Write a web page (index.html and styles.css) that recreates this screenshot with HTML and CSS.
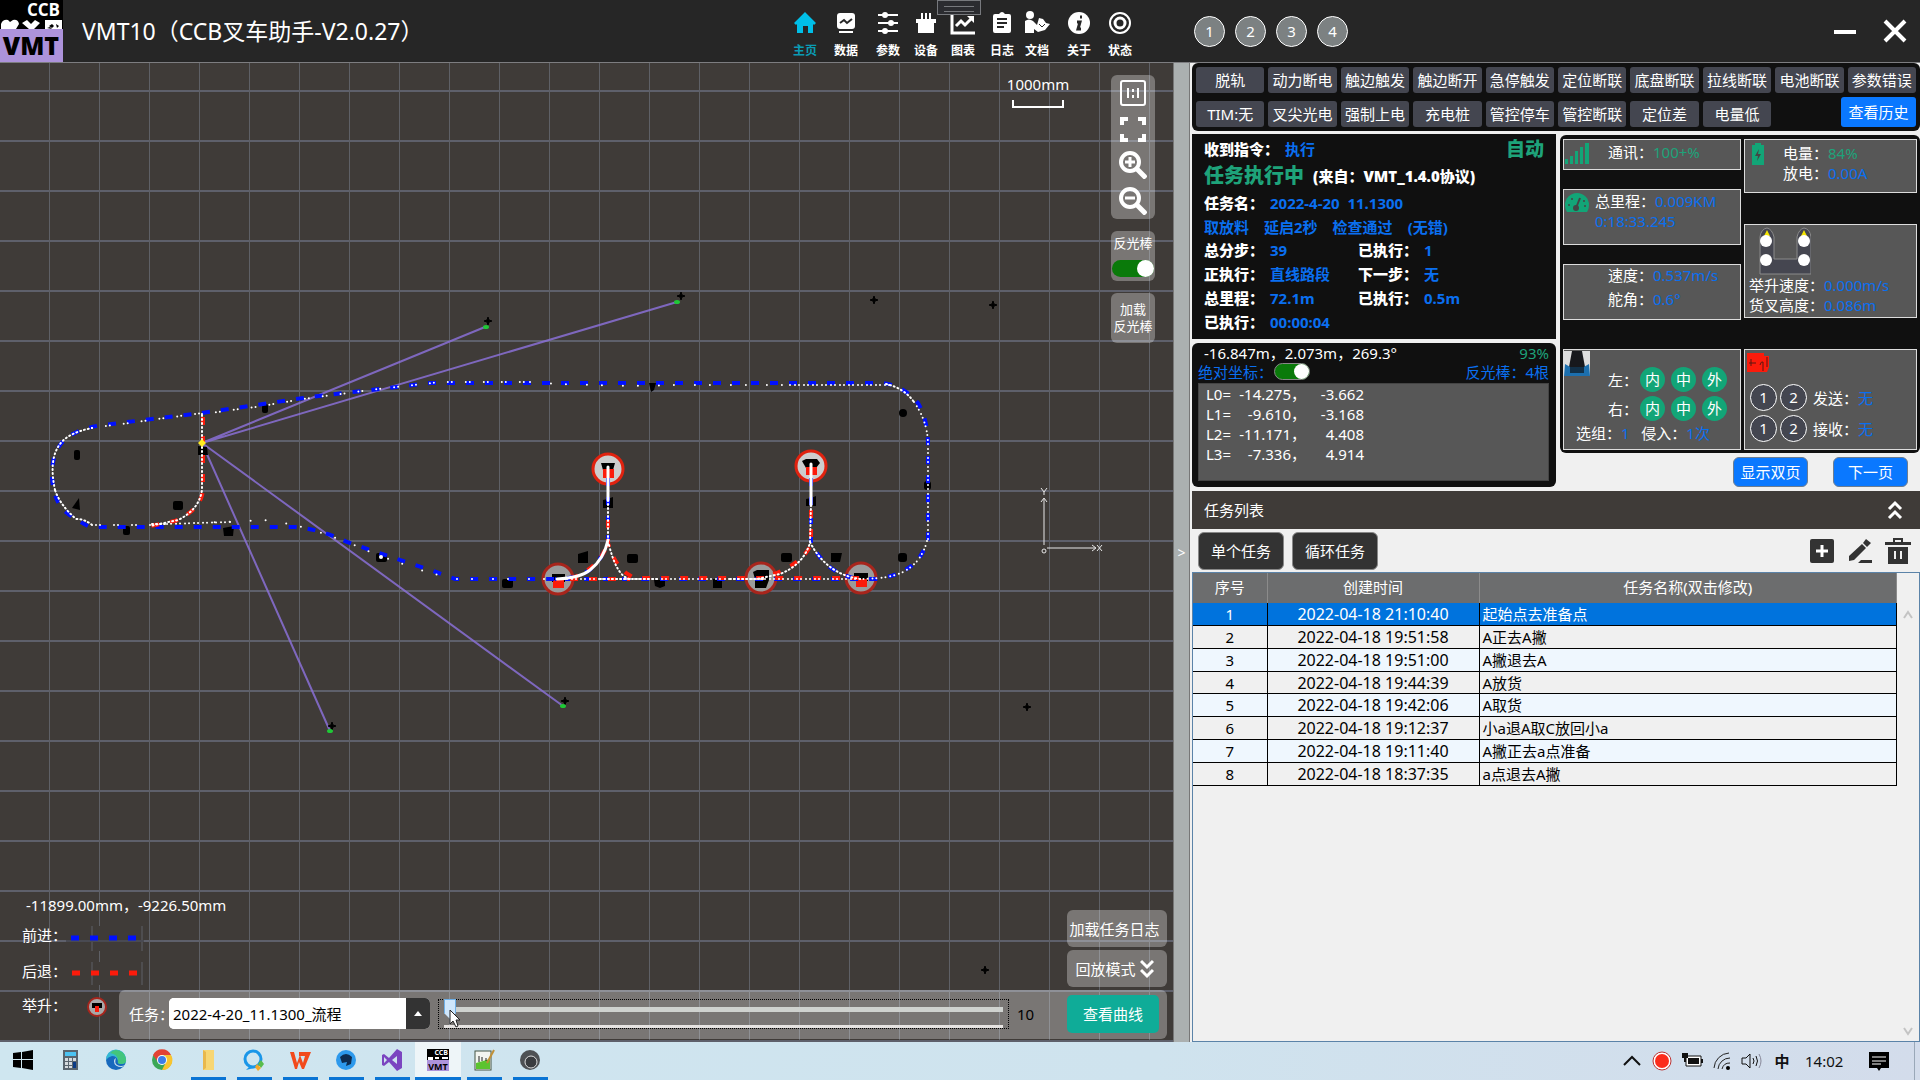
FILE: index.html
```html
<!DOCTYPE html>
<html lang="zh-CN">
<head>
<meta charset="utf-8">
<title>VMT10（CCB叉车助手-V2.0.27）</title>
<link rel="stylesheet" href="styles.css">
</head>
<body>
<div class="app">
  <header class="topbar">
    <svg class="logo" viewBox="0 0 63 62">
      <rect width="63" height="62" fill="#000"/>
      <rect y="29" width="63" height="33" fill="#ad93db"/>
      <text x="60" y="16" text-anchor="end" class="logo-small">CCB</text>
      <path d="M1 29V24Q3 19 8 20L10 22L13 20Q18 19 19 24L16 29Z M22 23L27 20L31 24L35 20L40 23L34 29H29Z M45 20H62V29H45Z" fill="#fff"/>
      <path d="M49 26l3-2 2 2-2 2zM56 24l3 2-2 2zM47 28l3-1 2 2z" fill="#000"/>
      <text x="31" y="55" text-anchor="middle" class="logo-big">VMT</text>
    </svg>
    <h1 class="title">VMT10（CCB叉车助手-V2.0.27）</h1>
    <nav class="nav">
      <a href="#" class="nav-item active"><svg viewBox="0 0 24 24"><path d="M12 1L23 12L21 14L20 13V22H15V15H10V22H4V13L3 14L1 12Z" fill="currentColor"/></svg>主页</a>
      <a href="#" class="nav-item"><svg viewBox="0 0 24 24"><rect x="3" y="2" width="18" height="16" rx="3" fill="currentColor"/><path d="M6 12l4-3 3 3 5-4" fill="none" stroke="#262626" stroke-width="2"/><path d="M5 20H19V22H5Z" fill="currentColor"/></svg>数据</a>
      <a href="#" class="nav-item"><svg viewBox="0 0 24 24"><g stroke="currentColor" stroke-width="2"><path d="M2 4H22M2 12H22M2 20H22"/></g><g fill="currentColor"><circle cx="9" cy="4" r="3"/><circle cx="15" cy="12" r="3"/><circle cx="9" cy="20" r="3"/></g></svg>参数</a>
      <a href="#" class="nav-item"><svg viewBox="0 0 24 24"><path d="M2 8H22V12H20V22H4V12H2Z M7 2H9V8H7Z M11 2H13V8H11Z M15 2H17V8H15Z" fill="currentColor"/></svg>设备</a>
      <a href="#" class="nav-item"><svg viewBox="0 0 24 24"><path d="M1 4V22H24" fill="none" stroke="currentColor" stroke-width="3"/><path d="M5 15l5-5 4 4 7-7" fill="none" stroke="currentColor" stroke-width="3"/><path d="M16 5H23V12Z" fill="currentColor"/></svg>图表</a>
      <a href="#" class="nav-item"><svg viewBox="0 0 24 24"><path d="M5 3H9Q12-1 15 3H19Q21 3 21 5V20Q21 22 19 22H5Q3 22 3 20V5Q3 3 5 3Z" fill="currentColor"/><path d="M7 8H17M7 12H17M7 16H14" stroke="#262626" stroke-width="2"/></svg>日志</a>
      <a href="#" class="nav-item"><svg viewBox="0 0 24 24"><circle cx="5" cy="4" r="4" fill="currentColor"/><path d="M0 10Q4 7 8 10L12 14L14 7L18 8L21 12L25 13L20 19L13 21L9 18V22H0Z" fill="currentColor"/><path d="M14 13l3 3 3-3" stroke="#262626" fill="none"/></svg>文档</a>
      <a href="#" class="nav-item"><svg viewBox="0 0 24 24"><circle cx="12" cy="12" r="11" fill="currentColor"/><path d="M13 6h2M10 11h3l-2 7h3" fill="none" stroke="#262626" stroke-width="3"/></svg>关于</a>
      <a href="#" class="nav-item"><svg viewBox="0 0 24 24"><circle cx="12" cy="12" r="10" fill="none" stroke="currentColor" stroke-width="2"/><circle cx="12" cy="12" r="5" fill="none" stroke="currentColor" stroke-width="3"/></svg>状态</a>
    </nav>
    <div class="rounds"><button>1</button><button>2</button><button>3</button><button>4</button></div>
    <div class="winctl">
      <button aria-label="最小化"><svg viewBox="0 0 24 24"><path d="M1 13H23" stroke="#fff" stroke-width="4"/></svg></button>
      <button aria-label="关闭"><svg viewBox="0 0 24 24"><path d="M2 2L22 22M22 2L2 22" stroke="#fff" stroke-width="4"/></svg></button>
    </div>
    <div class="grip"></div>
  </header>

  <main class="main">
    <section class="map">
      <svg class="canvas" viewBox="0 63 1173 979" preserveAspectRatio="xMinYMin slice">
        <defs>
          <pattern id="grid" x="49" y="90" width="50" height="50" patternUnits="userSpaceOnUse">
            <rect width="50" height="2" fill="#5e606b"/><rect width="1" height="50" fill="#5e6066"/>
          </pattern>
          <path id="mark" d="M0-4L1-1L4 0L1 1L0 4L-1 1L-4 0L-1-1Z" stroke="#000" stroke-width="1"/>
          <g id="stop"><circle r="15" stroke-width="3"/></g>
        </defs>
        <rect y="63" width="1173" height="979" fill="#3f3b38"/>
        <rect y="63" width="1173" height="979" fill="url(#grid)"/>
        <g class="ray"><path d="M202 443L485 327M202 443L677 302M202 443L563 706M202 443L330 731"/></g>
        <g class="halo hot"><use href="#stop" x="608" y="469"/><use href="#stop" x="811" y="466"/></g>
        <g class="halo"><use href="#stop" x="558" y="579"/><use href="#stop" x="761" y="578"/><use href="#stop" x="861" y="578"/></g>
        <g class="tags">
          <rect x="262" y="404" width="6" height="9" rx="2"/><rect x="74" y="450" width="6" height="10" rx="2"/><path d="M72 508L79 498L80 510Z"/>
          <rect x="173" y="501" width="10" height="9" rx="2"/><rect x="123" y="526" width="7" height="9" rx="2"/><path d="M223 528L234 526L233 536H224Z"/>
          <rect x="376" y="553" width="11" height="9" rx="2"/><rect x="502" y="579" width="11" height="9" rx="2"/><path d="M198 446L207 447L208 455H198Z"/>
          <path d="M603 500L607 499L613 497V508H603Z"/><path d="M578 554L588 551V563H578Z"/><rect x="627" y="554" width="11" height="9" rx="2"/>
          <path d="M654 580H665V586L660 588L655 586Z"/><rect x="713" y="579" width="9" height="9"/><rect x="781" y="553" width="11" height="9" rx="2"/><path d="M831 553H842L840 562H831Z"/>
          <rect x="898" y="553" width="9" height="9" rx="3"/><rect x="924" y="481" width="7" height="9" rx="3"/><ellipse cx="903" cy="413" rx="4" ry="4"/>
          <path d="M649 383H656L654 390L651 392Z"/><path d="M806 499L811 498L816 496V506H806Z"/>
          <path d="M601 463H615L613 470H603Z"/><path d="M802 461L806 459H817L820 463L816 468H806Z"/><path d="M552 574H565V582H552Z"/><path d="M753 572L757 570H769V580L766 588H755V579Z"/><path d="M854 573H868V581H854Z"/>
        </g>
        <g fill="#fb1b0b"><rect x="603" y="469" width="11" height="9"/><rect x="806" y="467" width="11" height="8"/><rect x="553" y="580" width="11" height="8"/><rect x="856" y="579" width="11" height="8"/></g>
        <g class="blue">
          <path d="M202 413L310 397L405 386L430 383H883Q902 385 918 403Q928 420 928 445V540Q920 563 905 570Q893 577 875 579H455L436 572L382 554L347 542Q320 529 295 527H90Q68 516 60 506Q52 492 52 474Q52 445 73 434Q86 427 103 425Z"/>
          <path d="M608 478V543Q600 563 588 571T555 579M811 478V543Q820 560 831 568Q845 578 862 579"/>
        </g>
        <g class="red">
          <path d="M203 417V490Q201 510 175 521L150 526M608 520V543Q613 562 626 573L634 578H861M811 510V545Q800 567 762 578M570 579H630M605 550Q595 570 570 579" />
        </g>
        <g class="white">
          <path class="d9" d="M202 414L255 407L310 398L370 390L405 386L440 382L530 382"/>
          <path class="d20" d="M530 382L560 384L630 386L680 385L790 385"/>
          <path class="d5" d="M790 385H892"/>
          <path class="d3" d="M886 384Q904 388 914 402"/>
          <path class="d5" d="M914 402Q928 422 928 445V541"/>
          <path class="d5" d="M927 541Q922 560 908 569Q894 579 860 579"/>
          <path class="d5" d="M860 579H565"/>
          <path class="d20" d="M565 579H455L430 573L400 563L375 554L347 542L307 528L270 520L200 523"/>
          <path class="d5" d="M230 522L165 524"/>
          <path class="d3" d="M165 524H150"/>
          <path class="d9" d="M150 525H90"/>
          <path class="d3" d="M92 525Q85 519 76 519Q60 505 55 490"/>
          <path class="d3" d="M55 490Q49 462 58 447Q66 433 92 428"/>
          <path class="d9" d="M92 428L202 413"/>
          <path class="d3" d="M202 415V490Q199 510 178 520L150 526"/>
          <path class="line" d="M608 467V500M811 464V505M608 540Q604 559 590 570Q580 578 557 579"/>
          <path class="d3" d="M608 500V545M811 505L810 543Q803 565 780 574L757 579M810 542Q826 574 860 579"/>
          <path class="d3" d="M609 545Q617 577 630 579"/>
          <path class="d3" d="M600 579H660M730 579H765"/>
        </g>
        <circle cx="381" cy="557" r="2" fill="#fff"/>
        <path d="M198 443L202 439L206 443L202 447Z" fill="#ffeb20"/>
        <g><use href="#mark" x="488" y="321"/><use href="#mark" x="681" y="296"/><use href="#mark" x="874" y="300"/><use href="#mark" x="993" y="305"/><use href="#mark" x="565" y="701"/><use href="#mark" x="332" y="726"/><use href="#mark" x="985" y="970"/><use href="#mark" x="1027" y="707"/></g>
        <g fill="#1fc836"><ellipse cx="486" cy="327" rx="3" ry="2"/><ellipse cx="677" cy="302" rx="3" ry="2"/><ellipse cx="563" cy="706" rx="3" ry="2"/><ellipse cx="330" cy="731" rx="3" ry="2"/></g>
        <g class="axis"><path d="M1044 545V499M1041 502L1044 498L1047 502M1047 548H1095M1092 545L1096 548L1092 551"/><circle cx="1044" cy="551" r="2"/><path d="M1041 488L1044 492L1047 488M1044 492V495M1097 545L1102 551M1102 545L1097 551"/></g>
        <path d="M1013 100V107H1063V100" fill="none" stroke="#fff" stroke-width="2"/>
        <text x="1038" y="90" text-anchor="middle" class="scale-text">1000mm</text>
        <text x="26" y="911" class="scale-text">-11899.00mm，-9226.50mm</text>
        <g class="legend">
          <rect x="66" y="926" width="78" height="25" fill="#3f3b38"/><rect x="66" y="962" width="78" height="23" fill="#3f3b38"/>
          <path d="M92 926V951M142 926V951M92 962V985M142 962V985" stroke="#5e6066"/><path d="M66 941H144" stroke="#494a52" stroke-width="2"/>
          <path d="M71 938H140" stroke="#0010ff" stroke-width="5" stroke-dasharray="8 11"/><path d="M72 973H140" stroke="#fb1b0b" stroke-width="5" stroke-dasharray="8 11"/>
          <circle cx="97" cy="1007" r="9" fill="#a8a8a8" stroke="#a8251c" stroke-width="2"/><path d="M92 1003H102V1008H92Z" fill="#000"/><path d="M95 1006H99V1012H95Z" fill="#fb1b0b"/>
          <text x="22" y="941" class="scale-text">前进：</text><text x="22" y="977" class="scale-text">后退：</text><text x="22" y="1011" class="scale-text">举升：</text>
        </g>
      </svg>
      <div class="map-tools">
        <div class="glass zoombox">
          <button aria-label="原始比例"><svg viewBox="0 0 28 28"><rect x="2" y="2" width="24" height="24" rx="2" fill="none" stroke="#fff" stroke-width="2"/><path d="M9 9V19M19 9V19" stroke="#fff" stroke-width="2"/><path d="M13 10H15V13H13ZM13 16H15V19H13Z" fill="#fff"/></svg></button>
          <button aria-label="全屏"><svg viewBox="0 0 28 28"><path d="M3 10V4H9M19 4H25V10M25 19V25H19M9 25H3V19" fill="none" stroke="#fff" stroke-width="4"/></svg></button>
          <button aria-label="放大"><svg viewBox="0 0 28 28"><circle cx="11" cy="11" r="9" fill="none" stroke="#fff" stroke-width="4"/><path d="M18 18L27 27" stroke="#fff" stroke-width="5"/><path d="M6 11H16M11 6V16" stroke="#fff" stroke-width="3"/></svg></button>
          <button aria-label="缩小"><svg viewBox="0 0 28 28"><circle cx="11" cy="11" r="9" fill="none" stroke="#fff" stroke-width="4"/><path d="M18 18L27 27" stroke="#fff" stroke-width="5"/><path d="M6 11H16" stroke="#fff" stroke-width="3"/></svg></button>
        </div>
        <label class="glass reflector">反光棒<input type="checkbox" class="switch wide" checked></label>
        <button class="glass load-ref">加载<br>反光棒</button>
      </div>
      <div class="map-bottom">
        <button class="glass side-btn">加载任务日志</button>
        <button class="glass side-btn">回放模式<svg viewBox="0 0 14 20"><path d="M1 2L7 8L13 2M1 11L7 17L13 11" fill="none" stroke="#fff" stroke-width="3"/></svg></button>
        <div class="glass playbar">
          <label for="task">任务：</label>
          <div class="combo"><select id="task"><option>2022-4-20_11.1300_流程</option></select><span class="combo-arrow"></span></div>
          <div class="slider"><input type="range" min="0" max="100" value="0" aria-label="回放进度"><span class="ticks"></span></div>
          <output class="speed">10</output>
          <button class="curve-btn">查看曲线</button>
        </div>
      </div>
      <svg class="cursor" viewBox="0 0 12 19"><path d="M1 1V15L4 12L7 18L9 17L7 11H11Z" fill="#fff" stroke="#222"/></svg>
    </section>

    <div class="splitter">&gt;</div>

    <aside class="side">
      <section class="alarms">
        <span>脱轨</span><span>动力断电</span><span>触边触发</span><span>触边断开</span><span>急停触发</span><span>定位断联</span><span>底盘断联</span><span>拉线断联</span><span>电池断联</span><span>参数错误</span>
        <span>TIM:无</span><span>叉尖光电</span><span>强制上电</span><span>充电桩</span><span>管控停车</span><span>管控断联</span><span>定位差</span><span>电量低</span>
        <button class="history">查看历史</button>
      </section>
      <div class="panels">
        <div class="col">
          <section class="status">
            <div class="row first"><b>收到指令：</b><i>执行</i><strong>自动</strong></div>
            <div class="row big"><strong>任务执行中</strong><b>(来自：VMT_1.4.0协议)</b></div>
            <div class="row"><b>任务名：</b><i>2022-4-20&nbsp; 11.1300</i></div>
            <div class="row steps"><i>取放料</i><i>延启2秒</i><i>检查通过</i><i>(无错)</i></div>
            <div class="row"><b>总分步：</b><i class="w">39</i><b>已执行：</b><i>1</i></div>
            <div class="row"><b>正执行：</b><i class="w">直线路段</i><b>下一步：</b><i>无</i></div>
            <div class="row"><b>总里程：</b><i class="w">72.1m</i><b>已执行：</b><i>0.5m</i></div>
            <div class="row"><b>已执行：</b><i>00:00:04</i></div>
          </section>
          <section class="pose">
            <div class="pose-line top"><span>-16.847m，2.073m，269.3°</span><em>93%</em></div>
            <div class="pose-line"><label for="abs">绝对坐标：</label><input id="abs" type="checkbox" class="switch" checked><span class="end">反光棒：4根</span></div>
            <div class="coords">
              <span>L0=</span><span>-14.275，</span><span>-3.662</span>
              <span>L1=</span><span>-9.610，</span><span>-3.168</span>
              <span>L2=</span><span>-11.171，</span><span>4.408</span>
              <span>L3=</span><span>-7.336，</span><span>4.914</span>
            </div>
          </section>
        </div>
        <div class="col">
          <section class="cards">
            <div class="card-col left">
              <div class="card signal"><svg viewBox="0 0 24 22"><path d="M0 22V17H3V22ZM5 22V14H8V22ZM10 22V9H13V22ZM15 22V5H18V22ZM20 22V1H24V22Z" fill="#12a577"/></svg><p>通讯：<em>100+%</em></p></div>
              <div class="card odo"><svg viewBox="0 0 24 20"><path d="M2 19Q0 16 0 12A12 12 0 0 1 24 12Q24 16 22 19Z" fill="#12a577"/><path d="M11 15L15 5" stroke="#444" stroke-width="2"/><circle cx="11" cy="15" r="3" fill="#444"/><g fill="#444"><circle cx="4" cy="12" r="1"/><circle cx="7" cy="6" r="1"/><circle cx="19" cy="8" r="1"/><circle cx="20" cy="13" r="1"/></g></svg><p>总里程：<i>0.009KM</i><br><i>0:18:33.245</i></p></div>
              <div class="card speedo"><p>速度：<i>0.537m/s</i></p><p>舵角：<i>0.6°</i></p></div>
              <div class="card radar">
                <svg class="lidar" viewBox="0 0 26 25"><rect width="26" height="25" fill="#ddd"/><path d="M8 0H18L21 16H5Z" fill="#17181c"/><path d="M1 13L8 17H18L25 13L26 25H0Z" fill="#1c6fae"/><path d="M6 16H20V22H6Z" fill="#123048"/></svg>
                <div class="zone">左：<span>内</span><span>中</span><span>外</span></div>
                <div class="zone">右：<span>内</span><span>中</span><span>外</span></div>
                <p>选组：<i>1</i> &nbsp; 侵入：<i>1次</i></p>
              </div>
            </div>
            <div class="card-col right">
              <div class="card power"><svg viewBox="0 0 12 22"><path d="M3 0H9V2H12V22H0V2H3Z" fill="#12a577"/><path d="M7 6L3 13H6L5 18L9 11H6Z" fill="#444"/></svg><p>电量：<em>84%</em><br>放电：<i>0.00A</i></p></div>
              <div class="card fork">
                <svg viewBox="0 0 52 48"><path d="M1 47V10Q2 2 8 1Q13 2 15 10V32H38V10Q40 2 45 1Q51 2 52 10V47Z" fill="#454650" stroke="#8b8b8b"/><path d="M5 9L8 3L11 9ZM42 9L45 3L48 9Z" fill="#f3e400"/><g fill="#fff"><circle cx="7" cy="14" r="6"/><circle cx="7" cy="33" r="6"/><circle cx="45" cy="14" r="6"/><circle cx="45" cy="33" r="6"/></g></svg>
                <p>举升速度：<i>0.000m/s</i></p><p>货叉高度：<i>0.086m</i></p>
              </div>
              <div class="card comm">
                <svg viewBox="0 0 22 20"><path d="M0 0H17V3L22 3V14L20 19H0Z" fill="#fb1b0b"/><path d="M4 6V13M2 10H9M13 12Q14 8 16 9V18M20 4V14" stroke="#5b1710" fill="none"/></svg>
                <div class="io"><span>1</span><span>2</span>发送：<i>无</i></div>
                <div class="io"><span>1</span><span>2</span>接收：<i>无</i></div>
              </div>
            </div>
          </section>
          <div class="pager"><button>显示双页</button><button>下一页</button></div>
        </div>
      </div>
      <div class="list-head"><h2>任务列表</h2><svg viewBox="0 0 16 20"><path d="M2 9L8 3L14 9M2 18L8 12L14 18" fill="none" stroke="#fff" stroke-width="3"/></svg></div>
      <div class="list-tools">
        <button class="dark">单个任务</button><button class="dark">循环任务</button>
        <button class="tool" aria-label="新增"><svg viewBox="0 0 26 26"><rect x="1" y="1" width="24" height="24" rx="2" fill="#333"/><path d="M13 7V19M7 13H19" stroke="#fff" stroke-width="3"/></svg></button>
        <button class="tool" aria-label="编辑"><svg viewBox="0 0 26 26"><path d="M2 23V18L15 6L19 10L7 22ZM16 5L19 1L24 5L20 9ZM11 25L14 22H25V25Z" fill="#333"/></svg></button>
        <button class="tool" aria-label="删除"><svg viewBox="0 0 26 26"><path d="M0 4H8V0H18V4H26V7H0ZM3 9H23V26H3Z" fill="#333"/><path d="M10 4V2H16V4Z" fill="#f0f0f0"/><path d="M10 13V21M16 13V21" stroke="#f0f0f0" stroke-width="2"/></svg></button>
      </div>
      <div class="table-box">
        <table>
          <colgroup><col class="c1"><col class="c2"><col></colgroup>
          <thead><tr><th>序号</th><th>创建时间</th><th>任务名称(双击修改)</th></tr></thead>
          <tbody>
            <tr class="sel"><td>1</td><td>2022-04-18 21:10:40</td><td>起始点去准备点</td></tr>
            <tr><td>2</td><td>2022-04-18 19:51:58</td><td>A正去A撇</td></tr>
            <tr><td>3</td><td>2022-04-18 19:51:00</td><td>A撇退去A</td></tr>
            <tr><td>4</td><td>2022-04-18 19:44:39</td><td>A放货</td></tr>
            <tr><td>5</td><td>2022-04-18 19:42:06</td><td>A取货</td></tr>
            <tr><td>6</td><td>2022-04-18 19:12:37</td><td>小a退A取C放回小a</td></tr>
            <tr><td>7</td><td>2022-04-18 19:11:40</td><td>A撇正去a点准备</td></tr>
            <tr><td>8</td><td>2022-04-18 18:37:35</td><td>a点退去A撇</td></tr>
          </tbody>
        </table>
        <div class="scroll"><svg viewBox="0 0 10 10"><path d="M1 8L5 2L9 8" fill="none" stroke="#c4c4c4" stroke-width="2"/></svg><svg viewBox="0 0 10 10"><path d="M1 2L5 8L9 2" fill="none" stroke="#c4c4c4" stroke-width="2"/></svg></div>
      </div>
    </aside>
  </main>

  <footer class="taskbar">
    <div class="apps">
      <button aria-label="开始"><svg viewBox="0 0 24 24"><path d="M1 5L9 4V11H1ZM10 4L21 2V11H10ZM1 12H9V20L1 19ZM10 12H21V22L10 20Z" fill="#000"/></svg></button>
      <button aria-label="计算器"><svg viewBox="0 0 24 24"><rect x="5" y="2" width="15" height="20" fill="#59646e"/><rect x="7" y="4" width="11" height="4" fill="#4cc2f1"/><path d="M7 10h3v3h-3zM11 10h3v3h-3zM15 10h3v3h-3zM7 14h3v3h-3zM11 14h3v3h-3zM7 18h3v2h-3zM11 18h3v2h-3z" fill="#d5dade"/><path d="M15 14h3v6h-3z" fill="#0b3b86"/></svg></button>
      <button aria-label="Edge"><svg viewBox="0 0 24 24"><circle cx="12" cy="12" r="10" fill="#1769bd"/><path d="M2 12A10 10 0 0 1 22 11Q23 16 17 16Q13 16 14 13Q13 8 8 8Q4 9 2 12Z" fill="#35b9d4"/><path d="M12 2A10 10 0 0 1 22 11Q23 16 17 16Q13 16 14 13Q14 6 6 5Q9 2 12 2Z" fill="#43c57c"/><path d="M10 13Q10 19 18 19L21 17Q17 19 13 17Q10 15 12 10Q10 11 10 13Z" fill="#cfe4ef"/></svg></button>
      <button aria-label="Chrome"><svg viewBox="0 0 24 24"><circle cx="12" cy="12" r="10" fill="#3ba757"/><path d="M3 7A10 10 0 0 1 21 7H12L8 14Z" fill="#e34234"/><path d="M21 7A10 10 0 0 1 12 22L17 12L14 7Z" fill="#f9c42e"/><circle cx="12" cy="12" r="5" fill="#fff"/><circle cx="12" cy="12" r="4" fill="#3e7de8"/></svg></button>
      <button class="run" aria-label="文件夹"><svg viewBox="0 0 24 24"><path d="M7 2H18V22H7Z" fill="#f7d673"/><path d="M7 2L10 4V20L7 22Z" fill="#e9b84c"/></svg></button>
      <button class="run" aria-label="QQ浏览"><svg viewBox="0 0 24 24"><circle cx="11" cy="11" r="8" fill="none" stroke="#1a96e8" stroke-width="3"/><path d="M8 18L4 22L12 20Z" fill="#1a96e8"/><path d="M19 12l3 4-3 4-3-4z" fill="#59bd4b"/><path d="M15 16l4 4-3 3-3-4z" fill="#f6a825"/></svg></button>
      <button class="run" aria-label="WPS"><svg viewBox="0 0 24 24"><path d="M2 4H6L9 15L12 7L15 15L17 8H11V4H23L16 21H14L11 14L9 21H7Z" fill="#f24a1c"/></svg></button>
      <button class="run" aria-label="浏览器"><svg viewBox="0 0 24 24"><circle cx="12" cy="12" r="10" fill="#2d99ec"/><path d="M6 9Q12 3 18 9L17 16L12 18L13 14L8 15Z" fill="#0d2c50"/></svg></button>
      <button class="run" aria-label="Visual Studio"><svg viewBox="0 0 24 24"><path d="M17 1L22 4V20L17 23L9 14L4 18L2 17V7L4 6L9 10ZM17 8L12 12L17 16ZM4 9V15L7 12Z" fill="#7b45c0"/></svg></button>
      <button class="run on" aria-label="VMT"><svg viewBox="0 0 24 24"><rect x="1" y="1" width="22" height="12" fill="#000"/><rect x="1" y="12" width="22" height="11" fill="#ad93db"/><text x="22" y="7" text-anchor="end" class="mini-logo w">CCB</text><path d="M2 9h5v3h-5zM9 9h4v2h-4zM16 9h6v2h-6z" fill="#fff"/><text x="12" y="22" text-anchor="middle" class="mini-logo">VMT</text></svg></button>
      <button class="run" aria-label="记事本"><svg viewBox="0 0 24 24"><rect x="3" y="3" width="16" height="19" fill="#f3f5f0" stroke="#454"/><path d="M4 15L18 11V21H4Z" fill="#5cc42f"/><path d="M7 8V14M10 9V13M14 10V13" stroke="#222"/><path d="M22 2L15 15" stroke="#c09038" stroke-width="2"/></svg></button>
      <button class="run" aria-label="OBS"><svg viewBox="0 0 24 24"><circle cx="12" cy="12" r="10" fill="#4e5154"/><circle cx="13" cy="14" r="6" fill="#3a3c3f" stroke="#ddd"/></svg></button>
    </div>
    <div class="tray">
      <svg viewBox="0 0 24 24"><path d="M4 16L12 8L20 16" fill="none" stroke="#111" stroke-width="2"/></svg>
      <svg viewBox="0 0 24 24"><circle cx="12" cy="12" r="9" fill="#fff" stroke="#b33" /><circle cx="12" cy="12" r="7" fill="#fb2c1c"/></svg>
      <svg viewBox="0 0 24 24"><path d="M6 7H21V17H6Z" fill="#fff" stroke="#111"/><path d="M8 9H19V15H8Z M21 10H23V14H21Z M2 4H8V9H6V13H4V9H2Z" fill="#111"/></svg>
      <svg viewBox="0 0 24 24"><path d="M4 19A16 16 0 0 1 19 4M8 20A12 12 0 0 1 20 9M12 20A8 8 0 0 1 20 14" fill="none" stroke="#222" stroke-width="1"/><circle cx="18" cy="19" r="2"/></svg>
      <svg viewBox="0 0 24 24"><path d="M2 9H6L10 5V19L6 15H2ZM13 9Q15 12 13 15M16 7Q19 12 16 17" fill="none" stroke="#111"/><path d="M19 5Q23 12 19 19" fill="none" stroke="#889"/></svg>
      <span class="ime">中</span><time>14:02</time>
      <svg class="note" viewBox="0 0 24 24"><path d="M2 3H22V19H14L12 22L10 19H2Z" fill="#000"/><path d="M5 8H19M5 12H19M5 15H14" stroke="#fff"/></svg>
      <span class="peek"></span>
    </div>
  </footer>
</div>
</body>
</html>
```
FILE: styles.css
```css
* { box-sizing: border-box; }
body { margin: 0; font: 15px/20px "Noto Sans", "Noto Sans CJK SC", sans-serif; color: #fff; background: #f0f0f0; }
button { font: inherit; color: inherit; border: 0; padding: 0; margin: 0; background: none; }
p, h1, h2 { margin: 0; font-size: inherit; font-weight: normal; }
i, em { font-style: normal; }
i { color: #0a6ff0; }
em { color: #1ea37a; }
.app { display: flex; flex-direction: column; height: 100vh; }

.topbar { position: relative; display: flex; align-items: center; height: 63px; background: #262626; border-bottom: 1px solid #7d7d80; }
.logo { width: 63px; height: 62px; }
.logo-small { font: bold 17px "Open Sans", sans-serif; fill: #fff; }
.logo-big { font: 800 25px "Open Sans", sans-serif; fill: #000; }
.title { flex: 0 0 721px; padding-left: 19px; font-size: 23px; line-height: 30px; white-space: nowrap; }
.nav { display: grid; grid-template-columns: 42px 40px 44px 32px 42px 36px 34px 50px 32px; padding-top: 8px; }
.nav-item { display: flex; flex-direction: column; align-items: center; gap: 8px; color: #fff; text-decoration: none; font-weight: bold; font-size: 12px; line-height: 16px; }
.nav-item svg { width: 24px; height: 24px; overflow: visible; }
.nav-item.active { color: #0a9cb4; }
.nav-item.active svg { color: #00bfe8; }
.rounds { display: flex; gap: 10px; margin-left: 58px; }
.rounds button { width: 31px; height: 31px; border: 1px solid #fff; border-radius: 50%; background: #7c8182; }
.winctl { display: flex; gap: 26px; margin-left: auto; padding-right: 13px; }
.winctl svg { display: block; width: 24px; height: 24px; }
.grip { position: absolute; left: 937px; top: 0; width: 44px; height: 15px; background: #2b2c30; border: 1px solid #77797d; }
.grip::after { content: ""; display: block; margin: 5px 6px; height: 4px; border: solid #77797d; border-width: 1px 0; }

.main { flex: 1; min-height: 0; display: grid; grid-template-columns: 1173fr 17px 730fr; }
.map { position: relative; min-width: 0; overflow: hidden; display: flex; flex-direction: column; justify-content: space-between; background: #3f3b38; }
.canvas { position: absolute; inset: 0; width: 100%; height: 100%; }
.ray { stroke: #8a70d6; stroke-width: 2; opacity: .85; fill: none; }
.halo { fill: #9b9b9b; stroke: #a8251c; }
.halo.hot { fill: #cdcdcd; stroke: #e0220f; }
.blue, .red, .white, .axis { fill: none; }
.blue { stroke: #0010ff; stroke-width: 4; stroke-dasharray: 8 11; }
.red { stroke: #fb1b0b; stroke-width: 4; stroke-dasharray: 8 11; }
.white { stroke: #fff; stroke-width: 2; stroke-linecap: round; }
.d3 { stroke-dasharray: 1 3; }
.d5 { stroke-dasharray: 0 5 0 4; }
.d9 { stroke-dasharray: 0 14 0 4; }
.d20 { stroke-dasharray: 0 21 0 15; }
.line { stroke-width: 3; }
.axis { stroke: #e8e8e8; }
.scale-text { font: 15px "Noto Sans", "Noto Sans CJK SC", sans-serif; fill: #fff; }
.glass { background: rgba(255, 255, 255, .3); border-radius: 6px; }
.map-tools { position: relative; align-self: flex-end; display: flex; flex-direction: column; gap: 12px; width: 44px; margin: 12px 18px 0 0; font-size: 13px; line-height: 17px; text-align: center; }
.zoombox { display: flex; flex-direction: column; align-items: center; gap: 8px; padding: 4px 0; height: 144px; }
.zoombox svg { display: block; width: 28px; height: 28px; }
.reflector { display: flex; flex-direction: column; align-items: center; gap: 8px; height: 50px; padding-top: 4px; white-space: nowrap; }
.load-ref { height: 50px; white-space: nowrap; }
.switch { appearance: none; margin: 0; width: 36px; height: 17px; border: 1px solid #888; border-radius: 9px; background: #0a7a0a; display: flex; justify-content: flex-end; }
.switch::before { content: ""; width: 15px; height: 15px; border-radius: 50%; background: #fff; }
.switch.wide { width: 42px; border: 0; }
.switch.wide::before { width: 17px; height: 17px; }
.map-bottom { position: relative; display: flex; flex-direction: column; align-items: flex-end; gap: 3px; padding: 0 6px 3px 119px; }
.side-btn { display: flex; align-items: center; justify-content: center; gap: 4px; width: 100px; height: 37px; padding-right: 5px; white-space: nowrap; }
.side-btn svg { width: 14px; height: 20px; }
.playbar { align-self: stretch; display: flex; align-items: center; height: 49px; padding: 0 8px 2px 10px; }
.playbar label { width: 40px; white-space: nowrap; }
.combo { display: flex; width: 261px; height: 31px; background: #fff; border-radius: 5px; overflow: hidden; }
.combo select { appearance: none; flex: 1; min-width: 0; border: 0; padding: 0 4px; font: inherit; color: #000; background: #fff; }
.combo-arrow { width: 24px; background: #333; display: grid; place-items: center; }
.combo-arrow::after { content: ""; border: 4px solid transparent; border-top: 0; border-bottom: 5px solid #fff; }
.slider { flex: 1; height: 30px; margin: 0 8px; padding: 0 5px; border: 1px dotted #000; display: flex; flex-direction: column; justify-content: space-between; }
.slider input { appearance: none; display: block; width: 100%; height: 19px; margin: 0; background: linear-gradient(#cfd2cf, #cfd2cf) center 7px / 100% 5px no-repeat; }
.slider input::-webkit-slider-thumb { appearance: none; width: 12px; height: 20px; background: #cfe6fb; border: 1px solid #6fb0e8; clip-path: polygon(0 0, 100% 0, 100% 70%, 50% 100%, 0 70%); }
.ticks { height: 3px; background: #e6e3e1; }
.speed { width: 50px; color: #000; }
.curve-btn { width: 92px; height: 38px; border-radius: 5px; background: #0fac98; }
.cursor { position: absolute; left: 449px; top: 946px; width: 12px; height: 19px; }

.splitter { display: grid; place-items: center; background: #abb0b0; border: solid #777; border-width: 0 1px; font-size: 14px; }
.side { min-width: 0; display: flex; flex-direction: column; padding-left: 2px; color: #fff; background: #f0f0f0; }
.alarms { display: grid; grid-template-columns: repeat(10, minmax(0, 1fr)); gap: 8px 4px; padding: 4px; height: 68px; background: #101010; border-radius: 6px; }
.alarms span { height: 26px; line-height: 26px; text-align: center; white-space: nowrap; background: #444650; border-radius: 3px; }
.history { grid-column: 9 / 11; justify-self: end; width: 75px; height: 30px; margin-top: -4px; border-radius: 3px; background: #0a78ff; }
.panels { display: grid; grid-template-columns: 364fr 360fr; gap: 4px; margin-top: 3px; }
.col { min-width: 0; }
.status { height: 205px; padding: 3px 12px; background: #101010; font-weight: bold; }
.row { display: flex; align-items: center; height: 24px; white-space: nowrap; }
.row b { flex: 0 0 66px; }
.row .w { flex: 0 0 88px; }
.row.first b { flex-basis: 81px; }
.row.first strong { margin-left: auto; font-size: 19px; color: #1ea37a; }
.row.big { height: 30px; gap: 9px; }
.row.big strong { font-size: 20px; color: #1ea37a; }
.row.steps { height: 23px; gap: 15px; }
.pose { height: 144px; margin-top: 4px; padding: 1px 7px 5px 6px; background: #101010; border-radius: 6px; }
.pose-line { display: flex; align-items: center; height: 19px; color: #0a6ff0; }
.pose-line.top { height: 18px; color: #fff; justify-content: space-between; padding-left: 6px; }
.pose-line label { width: 76px; white-space: nowrap; }
.end { margin-left: auto; }
.coords { display: grid; grid-template-columns: 28px 72px 58px; align-content: start; height: 98px; margin-top: 2px; padding-left: 7px; border: 1px solid #444; background: #575757; text-align: right; white-space: nowrap; }
.coords span:nth-child(3n+1) { text-align: left; }
.cards { display: grid; grid-template-columns: 178fr 173fr; gap: 3px; height: 318px; margin-top: 1px; padding: 4px 3px; background: #101010; border-radius: 6px; }
.card-col { min-width: 0; display: flex; flex-direction: column; }
.card { display: flex; border: 1px solid #ddd; background: #575757; white-space: nowrap; }
.card svg { flex: none; }
.signal { height: 31px; padding: 2px 1px; gap: 19px; }
.signal svg { width: 24px; height: 22px; }
.odo { height: 56px; padding: 1px 1px; gap: 6px; }
.odo svg { width: 24px; height: 20px; margin-top: 2px; }
.speedo { height: 56px; padding: 0 0 0 44px; flex-direction: column; gap: 4px; }
.left .odo, .left .speedo { margin-top: 19px; }
.left .radar { margin-top: 29px; }
.right .fork, .right .comm { margin-top: 31px; }
.radar { position: relative; height: 101px; padding: 15px 0 0 12px; flex-direction: column; }
.lidar { position: absolute; left: 0; top: 1px; width: 26px; height: 25px; }
.zone { display: flex; align-items: center; height: 29px; padding-left: 32px; }
.zone span { width: 25px; height: 25px; margin-right: 6px; line-height: 24px; border-radius: 50%; background: #12a577; text-align: center; }
.zone span:first-child { margin-left: 2px; }
.power { height: 54px; padding: 3px 7px; gap: 19px; }
.power svg { width: 12px; height: 22px; }
.fork { height: 94px; padding: 2px 4px; flex-direction: column; }
.fork svg { width: 52px; height: 48px; margin-left: 10px; }
.comm { height: 101px; padding: 3px 2px; flex-direction: column; }
.comm svg { width: 22px; height: 20px; margin-bottom: 9px; }
.io { display: flex; align-items: center; height: 31px; padding-left: 3px; }
.io span { width: 27px; height: 27px; margin-right: 3px; line-height: 25px; border: 1px solid #fff; border-radius: 50%; background: #444650; text-align: center; }
.io span + span { margin-right: 6px; }
.pager { display: flex; justify-content: flex-end; gap: 25px; padding: 4px 12px 0 0; }
.pager button { width: 75px; height: 30px; border: 1px solid #6d7d90; border-radius: 6px; background: #0a78ff; }
.list-head { display: flex; align-items: center; justify-content: space-between; height: 38px; margin-top: 4px; padding: 0 17px 0 12px; background: #3f3b38; }
.list-head svg { width: 16px; height: 20px; }
.list-tools { display: flex; align-items: center; gap: 8px; height: 43px; padding: 0 9px 0 6px; }
.dark { width: 86px; height: 38px; border: 1px solid #888; border-radius: 6px; background: #333; }
.tool { margin-left: 4px; }
.dark + .tool { margin-left: auto; }
.tool svg { display: block; width: 26px; height: 26px; }
.table-box { flex: 1; min-height: 0; display: flex; border: 1px solid #5b83a8; color: #000; background: #f0f0f0; }
table { flex: 1; align-self: flex-start; border-collapse: collapse; table-layout: fixed; width: 100%; height: 213px; }
.c1 { width: 74px; }
.c2 { width: 212px; }
th { height: 30px; padding: 0 0 2px; font-weight: normal; color: #fff; background: #6c6d6e; border-right: 1px solid #8b8b8b; }
td { padding: 0 3px; line-height: 20px; border: solid #000; border-width: 0 1px 1px 0; }
td:nth-child(-n+2) { text-align: center; }
td:nth-child(2) { font-size: 16px; }
tbody tr:nth-child(odd) { background: #eff7fe; }
tbody .sel:nth-child(odd) { color: #fff; background: #0073dd; }
.scroll { width: 22px; display: flex; flex-direction: column; justify-content: space-between; align-items: center; padding: 37px 0 5px; }
.scroll svg { width: 10px; height: 10px; }

.taskbar { display: flex; justify-content: space-between; height: 38px; background: linear-gradient(90deg, #cfe6f0, #cfe3ee 60%, #d3dceb); color: #111; }
.apps { display: flex; padding-left: 1px; }
.apps button { width: 46px; display: grid; place-items: center; border-bottom: 3px solid transparent; }
.apps button svg { width: 24px; height: 24px; }
.apps .run { background: linear-gradient(#0a74d4, #0a74d4) center bottom / 35px 3px no-repeat border-box; }
.apps .on { background: linear-gradient(#0a74d4, #0a74d4) center bottom / 46px 3px no-repeat border-box, #eef5f8; }
.mini-logo { font: bold 9px "Open Sans", sans-serif; }
.mini-logo.w { font-size: 7px; fill: #fff; }
.tray { display: flex; align-items: center; gap: 6px; }
.tray svg { width: 24px; height: 24px; }
.ime { width: 24px; text-align: center; font-weight: bold; }
.tray time { width: 42px; margin-left: 5px; }
.tray .note { margin: 0 17px 0 14px; }
.peek { width: 6px; height: 38px; border-left: 1px solid #9aa8b8; }
```
